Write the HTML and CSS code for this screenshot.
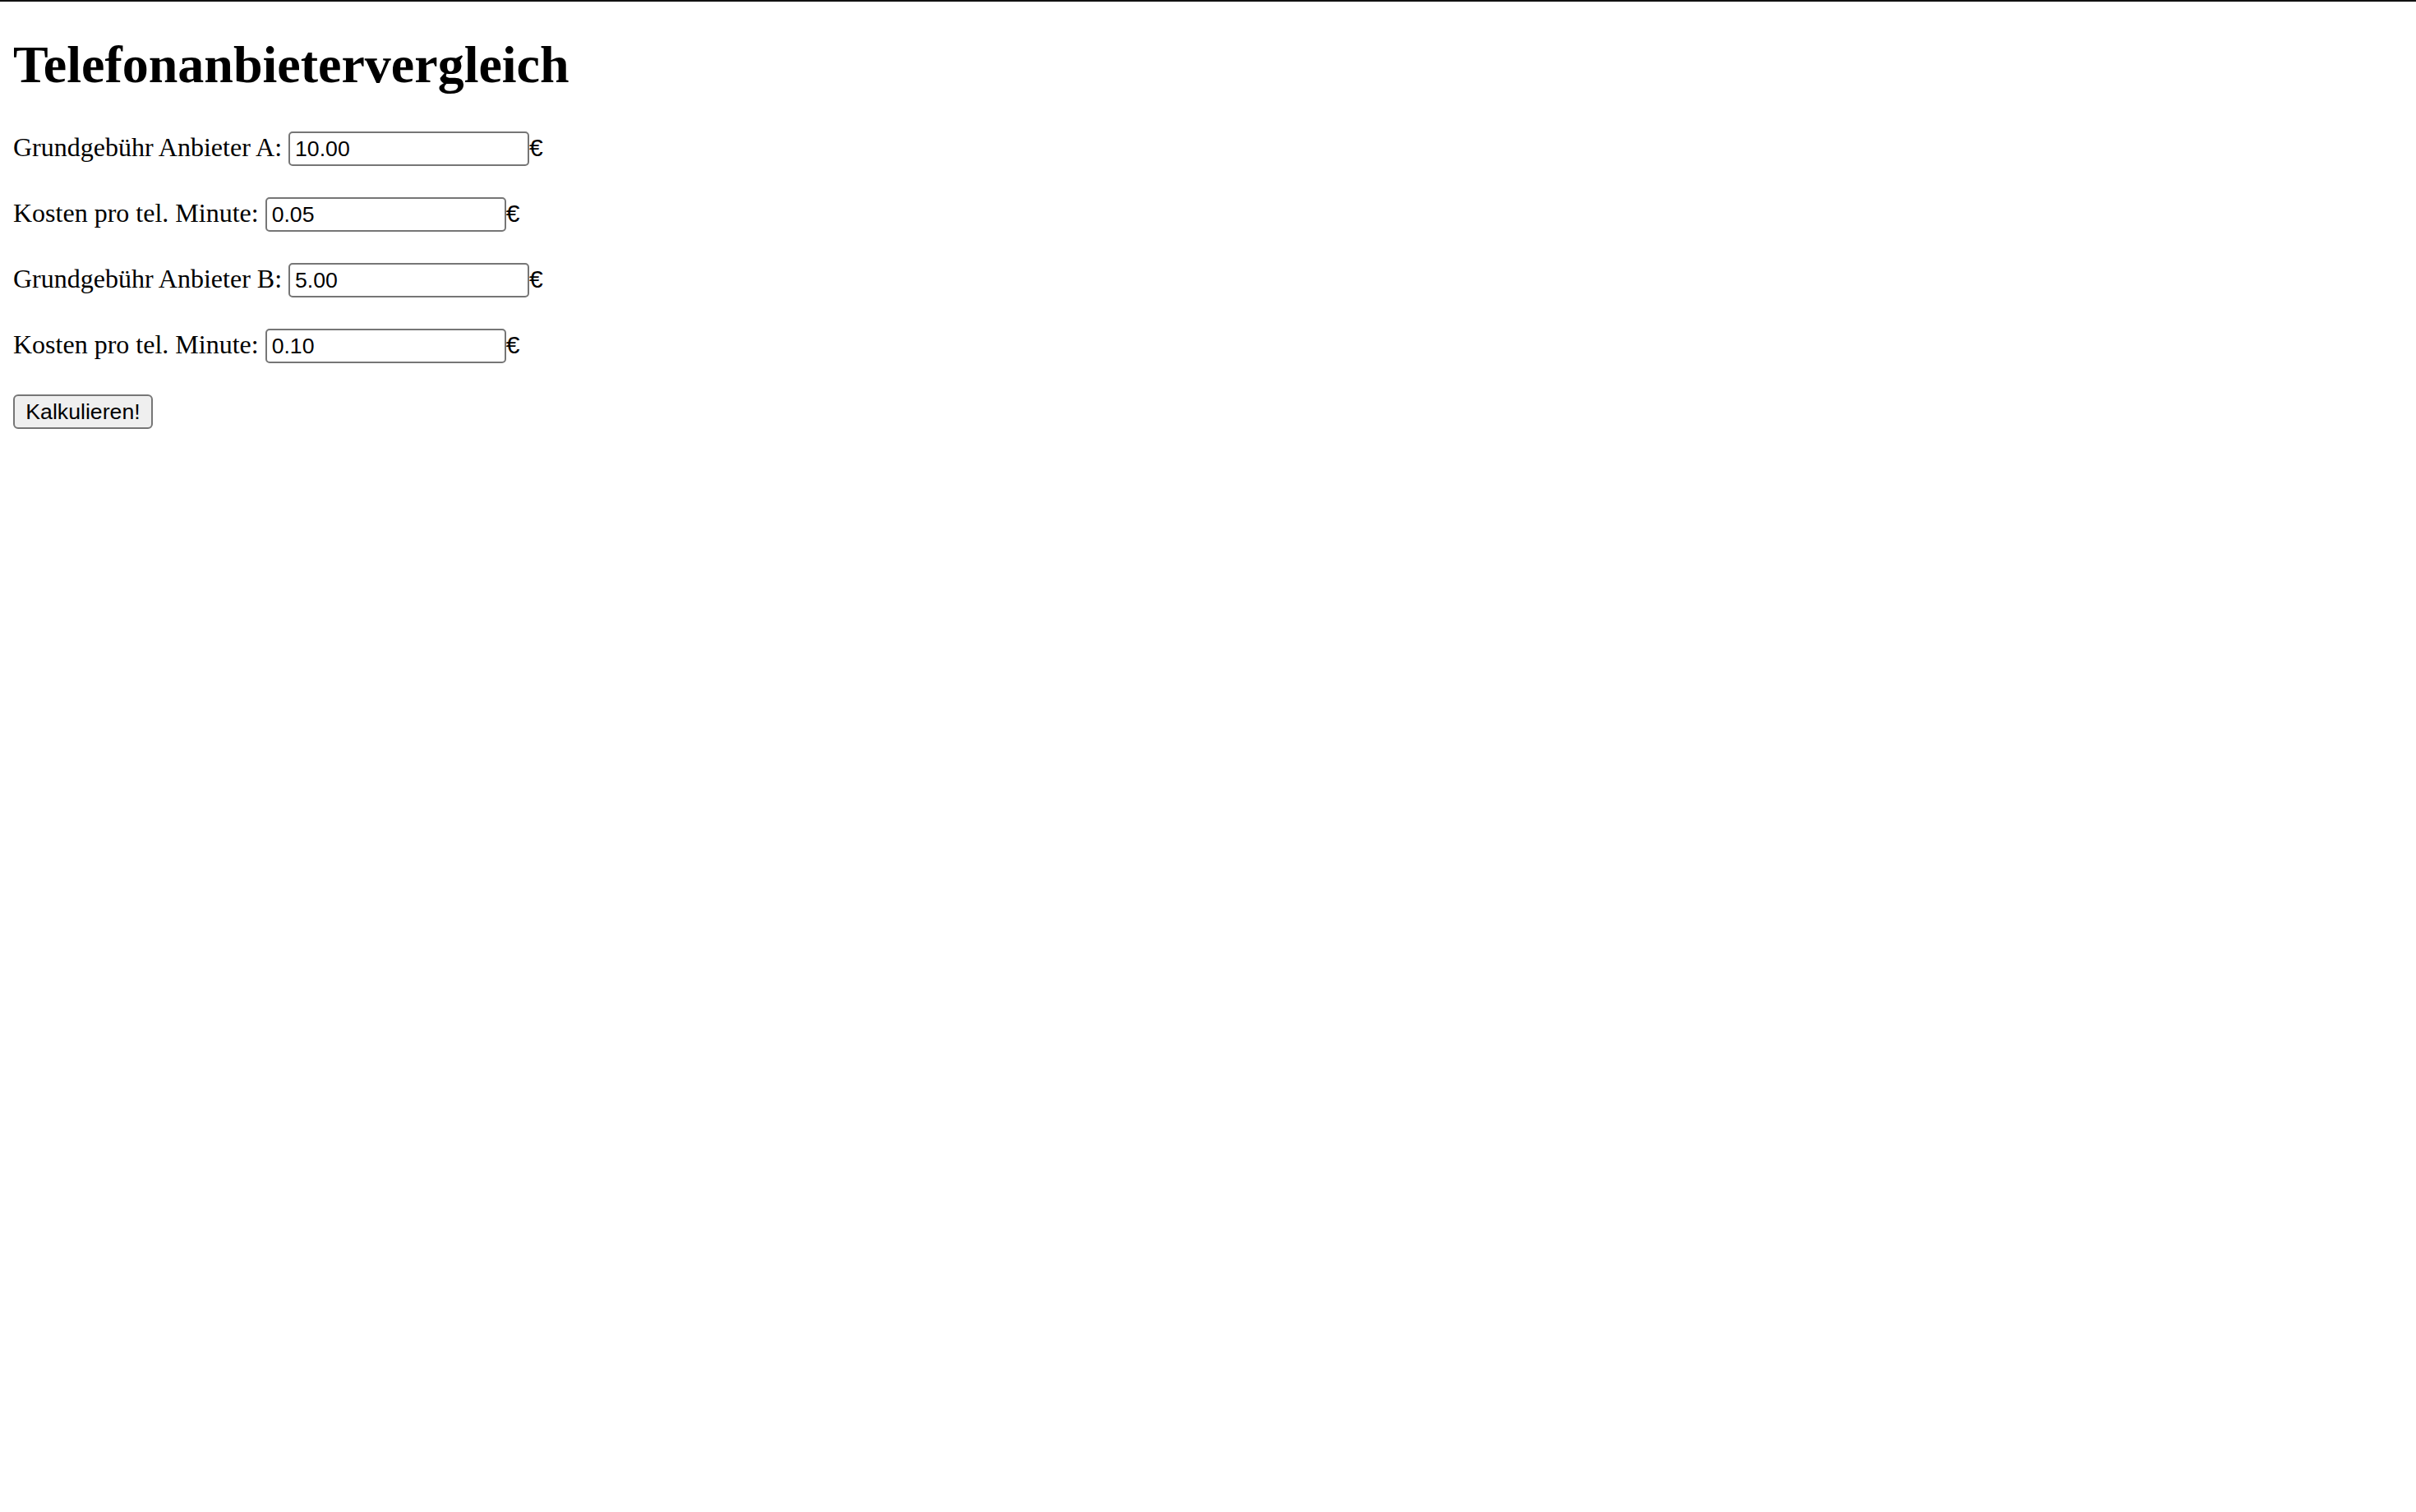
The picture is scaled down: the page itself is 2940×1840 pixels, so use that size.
FILE: index.html
```html
<!DOCTYPE html>
<html lang="de">
<head>
<meta charset="utf-8">
<title>Telefonanbietervergleich</title>
<link rel="stylesheet" href="styles.css">
</head>
<body>
<h1 class="title">Telefonanbietervergleich</h1>
<form class="form">
  <p class="row"><label class="label">Grundgebühr Anbieter A: <input class="field" type="text" value="10.00"></label><span class="unit">€</span></p>
  <p class="row"><label class="label">Kosten pro tel. Minute: <input class="field" type="text" value="0.05"></label><span class="unit">€</span></p>
  <p class="row"><label class="label">Grundgebühr Anbieter B: <input class="field" type="text" value="5.00"></label><span class="unit">€</span></p>
  <p class="row"><label class="label">Kosten pro tel. Minute: <input class="field" type="text" value="0.10"></label><span class="unit">€</span></p>
  <p class="row"><button class="btn" type="button">Kalkulieren!</button></p>
</form>
</body>
</html>
```
FILE: styles.css
```css
html {
  border-top: 2px solid #111;
  background: #fff;
}
body {
  margin: 0 16px 16px;
  font-family: "Liberation Serif", "Times New Roman", serif;
  font-size: 32px;
  color: #000;
}
.title {
  font-size: 64px;
  font-weight: bold;
  margin: 40px 0 41px;
}
.form {
  margin: 0;
}
.row {
  margin: 32px 0;
}
.field {
  box-sizing: border-box;
  width: 293px;
  height: 42px;
  padding: 2px 6px;
  border: 2px solid #767676;
  border-radius: 5px;
  font-family: "Liberation Sans", Arial, sans-serif;
  font-size: 26.667px;
  color: #000;
  background: #fff;
  margin: 3px 0;
  vertical-align: baseline;
}
.unit {
  font-family: "Liberation Sans", Arial, sans-serif;
  font-size: 30px;
}
.btn {
  box-sizing: border-box;
  width: 170px;
  height: 42px;
  padding: 0 12px;
  border: 2px solid #767676;
  border-radius: 6px;
  background: #efefef;
  font-family: "Liberation Sans", Arial, sans-serif;
  font-size: 26.667px;
  color: #000;
  margin: 3px 0;
}
```
